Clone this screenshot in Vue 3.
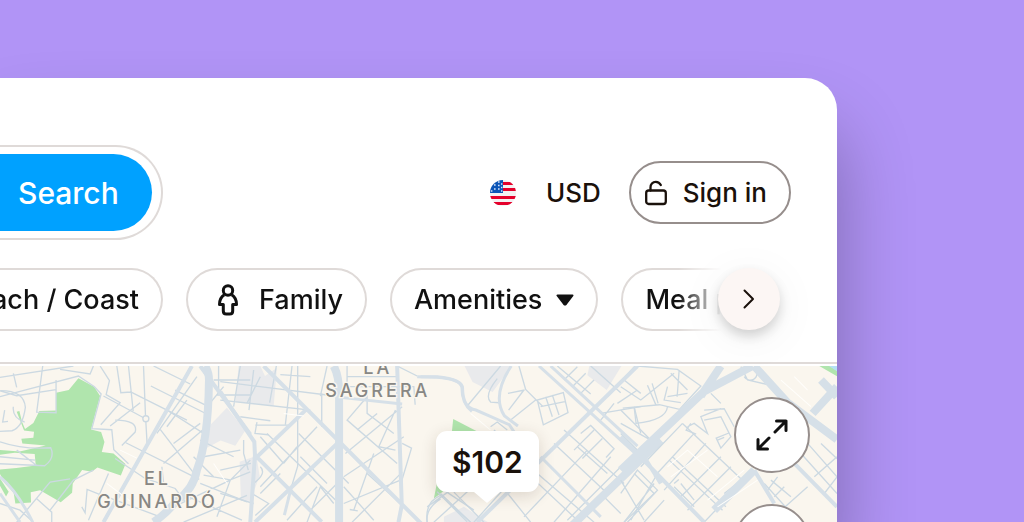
<template>
  <main class="stage">
    <section class="panel">
      <header class="top-bar">
        <div class="search-box">
          <button class="search-btn" type="button">Search</button>
        </div>
        <div class="account">
          <button class="currency" type="button">
            <svg class="flag" viewBox="0 0 26 26" aria-hidden="true">
              <clipPath id="flag-clip"><circle cx="13" cy="13" r="13" /></clipPath>
              <g clip-path="url(#flag-clip)">
                <rect width="26" height="26" fill="#f3f1f2" />
                <path d="M13 3.5h13M13 9.5h13M0 17.5h26M0 23.5h26" stroke="#e4002b" stroke-width="3.2" />
                <rect width="13" height="13" fill="#0b55b7" />
                <path
                  d="M4 5h1.6M8 2h1.6M8 5.5h1.6M4 9h1.6M8 9h1.6M11 4h1.4M11 7.5h1.4M11 11h1.4M1 11h1.4"
                  stroke="#d6e4fa"
                  stroke-width="1.5"
                />
              </g>
            </svg>
            <span>USD</span>
          </button>
          <button class="sign-in" type="button">
            <svg class="lock" viewBox="0 0 22 26" aria-hidden="true">
              <rect x="1.2" y="10.5" width="19.6" height="13.5" rx="2.5" />
              <path d="M5.5 10.5v-3a5.3 5.3 0 0 1 5.3-5.7c2.200 0 3.900 1 5 3.200" />
            </svg>
            <span>Sign in</span>
          </button>
        </div>
      </header>

      <nav class="filters" aria-label="Filters">
        <div class="chips">
          <button class="chip chip-cut" type="button">Beach / Coast</button>
          <button class="chip chip-family" type="button">
            <svg class="person" viewBox="0 0 20 32" aria-hidden="true">
              <circle cx="10" cy="6.5" r="4.7" />
              <path
                d="M6.3 10.7C3.2 12.6 1.5 16 1.5 20.5h3.8V27c0 2 1.5 3 3 3h3.4c1.5 0 3-1 3-3v-6.5h3.800c0-4.500-1.700-7.900-4.800-9.800"
              />
            </svg>
            <span>Family</span>
          </button>
          <button class="chip" type="button">
            <span>Amenities</span>
            <svg class="caret" viewBox="0 0 18 12" aria-hidden="true">
              <path d="M1.5 1.5h15L10 10q-1 1-2 0z" />
            </svg>
          </button>
          <button class="chip" type="button">Meal plan</button>
        </div>
        <button class="next" type="button" aria-label="More filters">
          <svg viewBox="0 0 12 20" aria-hidden="true"><path d="M1.5 1.5 10 10l-8.5 8.5" /></svg>
        </button>
      </nav>

      <div class="map">
        <svg class="map-art" viewBox="0 18 2508 468" preserveAspectRatio="xMinYMin slice" aria-hidden="true">
          <!-- built-up blocks -->
          <g class="block">
            <path d="M715 18h35v110l-45-4z" />
            <path d="M620 205l60-62 55 68-30 46-44-16-56 30z" />
            <path d="M718 305l50-18 10 60-28 75h-28z" />
            <path d="M716 18h64l14 30 36-25-10 115-112-16z" />
            <path d="M1392 18h142l-58 78-60-30z" />
            <path d="M1766 18h96l-44 72-58-44z" />
            <path d="M1330 470l60-30 72 46h-132z" />
          </g>

          <!-- parks -->
          <g class="park">
            <path
              d="M235 55l47 25 18 28-27 100 30 8 10 30-8 30 35 4 36 32-14 34-70-24-17 13-29-5-28 40-2 28-34 28-62-36-28 6 1 31-47 3-5-32-26-28-16-30v-12l50-4 58-8-3-34-60-4-45 6v-14l60 4 78-18-70-6-3-14 36-3 2-18-30-4-22-56 8-2 8 32 9 22 25-18 18-36 50-2V98l38-8z"
            />
            <path d="M0 355l26 40-8 14-18-32z" />
            <path d="M1358 177l78 40-30 40-56-2z" />
            <path d="M1300 415l12-60 40 20z" />
            <path d="M2455 18h32l21 14v17z" />
          </g>
          <path class="water" d="M2484 18h24v16z" />

          <!-- west streets -->
          <g class="street">
            <path d="M0 52l220-34M0 92l50 15 118-18M40 40l10 42M128 18l-18 138 58 2V60M0 110l235-62 48 32 20 22-28 104 60 3 6 60 44 42" />
            <path d="M180 28l90 14 10-24M300 18l28 44-10 42 42 24-58 66M310 108l126 68M350 18l12 80 30-2M385 18l14 135" />
            <path d="M2 92q70 0 74 50-8 60-40 70l-36 2M40 140q-4 34 34 46M14 150l-6 36 16-2" />
            <path d="M0 245q70 24 152 18 14 30-18 54l-134-6M0 290l105 10M50 270l60 46" />
            <path d="M0 430l60 20 40 36M50 486l100-120 60-10M155 486v-30l-45-40M150 450l70-90 60-30M325 340l-60 140M245 440l10 18 6-70 60 24M320 410l160 60" />
            <path d="M430 18l6 150 5 86M390 95l170 85M460 18l110 54M452 78l160 80M345 180q70 0 60 36l-40 40M377 248l220 110M420 128l-90 70" />
            <path d="M345 295l90 60 90 30 30 40M490 310l140-120M520 250l80-60M485 320l6 56M500 150l110 70M480 208l100 130M525 90l100 50" />
            <path d="M590 50l-120 170M640 60h110M655 18v70M620 140l50-60M650 105h100" />
            <path d="M610 345l80 14 60-24M600 370l140 55M565 410l160 70M520 440l170-80 60-60M550 486l190-80M690 360l-40 110M640 350l-60-60" />
            <path d="M610 290l110-20M600 240l100 50M730 240v40l14 50M560 120l-60 80" />
          </g>
          <g class="avenue">
            <path d="M575 18L310 486M600 18l150 205" />
            <path d="M0 350q50 40 98 136M0 400l60 86" class="mid" />
          </g>
          <path class="main-road" d="M614 18q14 20 12 50-2 170-36 262-12 60-60 90-30 40-70 66" />
          <circle class="roundabout" cx="437" cy="176" r="9" />

          <!-- centre streets -->
          <g class="street" transform="translate(660)">
            <path d="M0 65l320 40M60 18L40 140M100 30L86 150M168 18l-20 110M120 50l-40 80M215 18l-20 176M0 120l270 30M270 50l-90-6M320 18l-20 90" />
            <path d="M60 170l90 12M110 186l-6 34 40 4M232 18v300l-30 100M304 100v100M105 195h100M0 330l92-20M0 400l100 30M120 320q20 20-20 50M95 400l50 30-40 36" />
            <path d="M120 230l70 80M140 220l216 210M180 340l-60 60M235 220l150 150M290 200l-170 180M240 290l80 80M230 260l-40 50M290 380l-90 100M340 430l-40-50-40 106M270 450l80-80" />
            <path d="M380 18v80M380 50h150M380 80h200l4 54M530 18l60 30M440 100v60l80 60M440 110l-60 70 150 130M525 150l-50 110 50 10M545 140l-170 140" />
            <path d="M545 250l28 14-30 100M370 350l180-120M370 380l90 100M460 280l-60 170-12-2 24 4M395 486l150-150M370 430l170-70M410 210l60-50M440 340l100 90" />
            <path d="M620 486q-8-60 40-80l90 80M650 395l90 90M670 390l90 60M640 486l110-100" />
          </g>
          <g class="avenue" transform="translate(660)">
            <path d="M130 18l500 500M0 95l102 150 2 40-14 201M104 285l200 200M258 148L100 300M356 245L104 486M530 18l14 420M544 435l-10 51" />
            <path class="mid" d="M360 112l185 20M590 50l60 2q70 6 74 30 0 50 30 72M212 385l-20 80" />
            <path class="main-road" d="M340 18q16 30 16 80v388" />
          </g>

          <!-- east of the pin -->
          <g class="street" transform="translate(1260)">
            <path d="M240 18l-100 120M230 56q-40 50-20 70l26 2M295 18l20 70 50 50M310 90l-46 60M262 100l50-10M345 120l-75 60M350 120l18 74 74-36-14-60zM375 110l20 60M395 105l20 60M360 140l76-16" />
            <path d="M410 18l100 84M430 60l40-40M455 80l40-40M480 100l40-40M510 18l90 80M560 110l90-100M590 130l60-40M610 60l50 40M640 140l20 80M540 160l120-20M540 180l40-50" />
            <path d="M210 200l20-14 30 24M220 210l20 18M430 210l180 160M480 220l30-24 70 70-24 26M520 210l-60 60M545 235l-60 60M400 250l160 150M370 290l-60 40 160 150M350 340l170 146M500 270l-190 200" />
            <path d="M570 290l-170 196M610 310l-170 170M560 340l-90-80M600 460l-60-60M640 340l60 60-90 86M600 220l60 60M60 400l90 86M100 396l90 90M20 440l70-50M20 486q-6-40 40-70M330 486l-80-100-90 100" />
          </g>
          <g class="avenue" transform="translate(1260)">
            <path d="M650 18L170 486" />
            <path class="mid" d="M355 18l320 290M390 18l260 240M360 290l180 180" />
            <path class="mid" d="M0 50h50q76 8 76 34 0 60 40 66l100 44 40 60M272 18q-60 90-20 150l40 30" />
            <path class="main-road" d="M720 240L450 500" />
          </g>

          <!-- far east streets -->
          <g class="street" transform="translate(1860)">
            <path d="M0 80l60 40 100-80M50 18l120 10 70 50-64 70-60-14-110 10M80 76l26 60M94 70l18 60M175 30l-6 80M140 80l-10 40 50 8M200 90l-50-50M0 150l90 90M40 140l6 50q90-10 94-50M140 110l60-10M0 190l90 50" />
            <path d="M360 20l20 40 80 18M370 50a20 20 0 1 0 36-20M250 150l60-4 30 54M300 130l-30-30M200 200l20-10 40 30-20-50 60-24M250 180l50-10 30 60-30 34-14-30 40-16M210 190l-14 20 30 12M290 240l20-8" />
            <path d="M185 190l190 180M185 190L60 320M145 300l160 150M155 290l160 150M220 220L100 350M255 250L130 390M300 290l-120 120M330 320L200 450M370 360L250 486M400 330l-90 70" />
            <path d="M0 360l70 120M0 400l50-70 60 60-90 96M110 340l-80 140M100 370l-90 116M130 420l-60 66M160 380l60 60M180 370l40 50M160 370l14-12M430 370l100 110M450 360l60 50M470 350l-30 40M490 380l-30 30" />
            <path d="M560 250l88 100M600 250l48 46M540 280l108 120M520 310l128 130M580 350l68-60M610 400l38-50M560 380l-90 80" />
          </g>
          <g class="avenue" transform="translate(1860)">
            <path d="M0 230l250 256M70 290l50 80M520 310l128 130M400 330l60 100" />
            <path class="main-road" d="M0 330l250-236L395 18M300 18l-60 90M400 18l100 110 148 110M400 330L280 450M575 160l73-80M600 60l48 50" />
          </g>
          <g class="lane">
            <path d="M2000 320l60-50 90 80M2010 350l110-80M2120 420l110-90M2150 440l120-80M2340 60l90 80M2380 50l40 40M360 270l50 24M640 310l40 60M320 370l80 60M850 160l60 8M1410 160l60 50" />
          </g>

          <g class="place">
            <text x="472" y="376">EL</text>
            <text x="472" y="443">GUINARDÓ</text>
            <text x="1132" y="43">LA</text>
            <text x="1132" y="110">SAGRERA</text>
          </g>
        </svg>

        <button class="price" type="button">$102</button>

        <div class="map-tools">
          <button class="tool" type="button" aria-label="Expand map">
            <svg viewBox="0 0 32 32" aria-hidden="true">
              <path d="M19 13 30 2M20.5 2H30v9.5M13 19 2 30M2 20.5V30h9.5" />
            </svg>
          </button>
          <button class="tool" type="button" aria-label="Zoom in"></button>
        </div>
      </div>
    </section>
  </main>
</template>

<script setup>
</script>

<style>
body {
  margin: 0;
  background: #b194f6;
}
</style>

<style scoped>
.stage {
  box-sizing: border-box;
  height: 100vh;
  padding: 78px 187px 0 0;
  overflow: hidden;
  background: #b194f6;
  font-family: Inter, 'Liberation Sans', sans-serif;
  color: #1a110b;
}

.panel {
  display: flex;
  flex-direction: column;
  height: 100%;
  background: #fff;
  border-radius: 0 32px 0 0;
  box-shadow: 0 52px 76px rgba(0, 0, 0, 0.3);
}

button {
  box-sizing: border-box;
  padding: 0;
  border: 0;
  background: none;
  font: inherit;
  font-size: 26px;
  line-height: 32px;
  font-weight: 500;
  color: inherit;
  white-space: nowrap;
  cursor: pointer;
}

svg {
  display: block;
  flex: none;
}

.top-bar {
  display: flex;
  align-items: center;
  justify-content: space-between;
  padding: 67px 46px 0 0;
}

.search-box {
  box-sizing: border-box;
  padding: 7px 9px 7px 0;
  border: 2px solid #dfdad8;
  border-left: 0;
  border-radius: 0 48px 48px 0;
}

.search-btn {
  height: 77px;
  padding: 0 33px 0 18px;
  border-radius: 0 39px 39px 0;
  background: #00a1ff;
  color: #fff;
  font-size: 30px;
}

.account {
  display: flex;
  align-items: center;
  gap: 28px;
}

.currency {
  display: flex;
  align-items: center;
  gap: 30px;
}

.flag {
  width: 26px;
  height: 26px;
}

.sign-in {
  display: flex;
  align-items: center;
  gap: 16px;
  height: 63px;
  padding: 0 22px 0 14px;
  border: 2px solid #968e8c;
  border-radius: 32px;
}

.lock {
  width: 22px;
  height: 26px;
  fill: none;
  stroke: #1a110b;
  stroke-width: 2.3;
  stroke-linecap: round;
}

.filters {
  position: relative;
  padding: 28px 57px 31px 0;
  border-bottom: 2px solid #dfdad8;
}

.chips {
  display: flex;
  gap: 23px;
  overflow: hidden;
  color: #111;
  mask-image: linear-gradient(to left, transparent 58px, #000 102px);
}

.chip {
  display: flex;
  flex: none;
  align-items: center;
  gap: 14px;
  height: 63px;
  padding: 0 22px;
  border: 2px solid #dfdad8;
  border-radius: 32px;
  font-size: 27px;
}

.chip-cut {
  justify-content: flex-end;
  width: 163px;
  border-left: 0;
  border-radius: 0 32px 32px 0;
}

.chip-family {
  gap: 21px;
  padding-left: 30px;
}

.person {
  width: 20px;
  height: 32px;
  fill: none;
  stroke: #111;
  stroke-width: 3;
  stroke-linejoin: round;
}

.caret {
  width: 18px;
  height: 12px;
  fill: #111;
  stroke: #111;
  stroke-width: 2;
  stroke-linejoin: round;
}

.next {
  position: absolute;
  top: 28px;
  right: 57px;
  display: flex;
  align-items: center;
  justify-content: center;
  width: 62px;
  height: 62px;
  border-radius: 50%;
  background: #fcf6f4;
  box-shadow: 0 6px 12px rgba(0, 0, 0, 0.16), 0 8px 48px rgba(0, 0, 0, 0.06);
}

.next svg {
  width: 12px;
  height: 20px;
  fill: none;
  stroke: #1a110b;
  stroke-width: 2;
  stroke-linecap: round;
  stroke-linejoin: round;
}

.map {
  position: relative;
  flex: 1;
  min-height: 0;
  margin-top: 2px;
  overflow: hidden;
  background: #faf6ee;
}

.map-art {
  width: 100%;
  height: 100%;
}

.block {
  fill: #e9eaec;
}

.park {
  fill: #b0e5ad;
}

.water {
  fill: #b4dff5;
}

.street {
  fill: none;
  stroke: #ccd9e2;
  stroke-width: 4;
}

.roundabout {
  fill: #faf6ee;
  stroke: #ccd9e2;
  stroke-width: 4;
}

.avenue {
  fill: none;
  stroke: #d6e0e8;
  stroke-width: 12;
}

.mid {
  stroke-width: 9;
}

.main-road {
  fill: none;
  stroke: #d6e0e8;
  stroke-width: 24;
}

.lane {
  fill: none;
  stroke: #fffefb;
  stroke-width: 3;
}

.place {
  fill: #888784;
  stroke: #faf6ee;
  stroke-width: 8;
  paint-order: stroke;
  font-size: 54px;
  font-weight: 500;
  letter-spacing: 9px;
  text-anchor: middle;
}

.price {
  position: absolute;
  top: 65px;
  left: 436px;
  height: 61px;
  padding: 0 16px;
  border-radius: 11px;
  background: #fff;
  box-shadow: 0 4px 16px rgba(60, 40, 20, 0.16);
  font-size: 30px;
  font-weight: 600;
}

.price::after {
  content: '';
  position: absolute;
  top: 100%;
  left: 50%;
  margin-left: -13px;
  border: 13px solid transparent;
  border-top: 11px solid #fff;
  border-bottom: 0;
}

.map-tools {
  position: absolute;
  top: 31px;
  right: 27px;
  display: grid;
  gap: 31px;
}

.tool {
  display: flex;
  align-items: center;
  justify-content: center;
  width: 76px;
  height: 76px;
  border: 2px solid #968e8c;
  border-radius: 50%;
  background: #fff;
}

.tool svg {
  width: 32px;
  height: 32px;
  fill: none;
  stroke: #111;
  stroke-width: 3;
  stroke-linecap: round;
  stroke-linejoin: round;
}
</style>
